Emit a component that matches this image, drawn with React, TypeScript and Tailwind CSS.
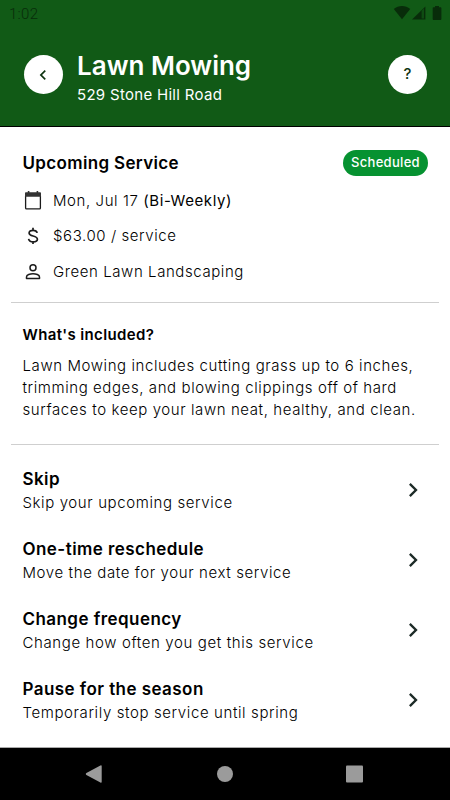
import type { ReactNode } from "react";
import { MdChevronLeft, MdChevronRight } from "react-icons/md";

function StatusBar() {
  return (
    <div className="flex h-[28px] items-center justify-between pl-[9px] pr-[8px] text-[#082c0a]">
      <span className="font-[Roboto,sans-serif] text-[15px] leading-[28px] font-light tracking-[0.3px]">1:02</span>
      <svg width="49" height="16" viewBox="0 0 49 16" fill="currentColor" aria-hidden="true">
        <path d="M0.8 3.1C5.4-0.9 12.6-0.9 17.2 3.1L9 13.2Z" />
        <path d="M19 13.5L32.4 0.4V13.5Z" />
        <path d="M28.6 4.8l2.4-2.3v9.9h-2.4z" fill="#115a16" fillOpacity=".7" />
        <path d="M42 0h4v1.3h1.6c.4 0 .8.4.8.8v11c0 .5-.4.9-.8.9h-7.1a.9.9 0 0 1-.8-.9v-11c0-.4.4-.8.8-.8H42z" />
      </svg>
    </div>
  );
}

function CalendarIcon() {
  return (
    <svg width="22" height="22" viewBox="0 0 22 22" fill="none" stroke="currentColor" aria-hidden="true">
      <path d="M3.6 6V17.9q0 .9.9.9h13q.9 0 .9-.9V6" strokeWidth="1.3" />
      <path d="M3 3.1q0-.9.9-.9H5.8V1h1.6v1.2h7.2V1h1.6v1.2h1.9q.9 0 .9.9v3.6H3z" fill="#333" stroke="none" />
    </svg>
  );
}

function DollarIcon() {
  return (
    <svg width="22" height="22" viewBox="0 0 22 22" fill="none" stroke="currentColor" strokeWidth="1.7" aria-hidden="true">
      <path d="M11 2.8v3M11 16v3M15.2 7.9C14.8 6.4 13.3 5.3 11.1 5.3 8.6 5.3 7.1 6.4 7.1 8c0 1.8 1.6 2.4 4 3 2.7.7 4.3 1.5 4.3 3.3 0 1.7-1.7 2.6-4.2 2.6-2.6 0-4.3-1.2-4.6-3" />
    </svg>
  );
}

function PersonIcon() {
  return (
    <svg width="22" height="22" viewBox="0 0 22 22" fill="none" stroke="currentColor" strokeWidth="1.5" aria-hidden="true">
      <circle cx="11" cy="6.7" r="3" />
      <path d="M4.5 17.4v-1.5c0-2 3.7-3.2 6.5-3.2s6.5 1.2 6.5 3.2v1.5z" strokeLinejoin="round" />
    </svg>
  );
}

function DetailRow({ icon, children }: { icon: ReactNode; children: ReactNode }) {
  return (
    <div className="flex h-[35.5px] items-center">
      <div className="flex w-[31px] shrink-0 text-[#1b1b1b]">{icon}</div>
      <div className="text-[15px] font-light tracking-[0.58px]">{children}</div>
    </div>
  );
}

function ActionRow({ title, text }: { title: string; text: string }) {
  return (
    <button className="flex h-[70.3px] w-full items-center justify-between pl-[22.5px] pr-[23px] text-left">
      <div className="pt-[2px]">
        <div className="text-[17px] leading-[24px] font-semibold tracking-[0.44px]">{title}</div>
        <div className="text-[15px] leading-[24px] font-light tracking-[0.61px]">{text}</div>
      </div>
      <MdChevronRight className="size-[28px] text-[#1d2b27]" />
    </button>
  );
}

export default function App() {
  return (
    <div className="flex h-[800px] w-[450px] flex-col overflow-hidden bg-white font-[Inter,sans-serif] text-black">
      <header className="h-[127px] border-b border-black bg-[#115a16]">
        <StatusBar />
        <div className="flex items-start pl-[24px] pr-[23px] pt-[20px] text-white">
          <button className="mt-[7px] flex size-[39px] items-center justify-center rounded-full bg-white pr-[2px] text-[#0d3310]">
            <MdChevronLeft className="size-[20px]" />
          </button>
          <div className="ml-[14px] flex-1 pt-px">
            <h1 className="text-[26px] leading-[34px] font-semibold tracking-[0px]">Lawn Mowing</h1>
            <p className="text-[15px] leading-[24px] tracking-[0.3px]">529 Stone Hill Road</p>
          </div>
          <button className="mt-[7px] flex size-[39px] items-center justify-center rounded-full bg-white text-[15px] font-medium text-[#0d3310]">?</button>
        </div>
      </header>

      <section className="mx-[11px] h-[176px] border-b border-[#cfcfcf] pl-[11px] pr-[11px] pt-[22px]">
        <div className="flex h-[27px] items-center justify-between">
          <h2 className="pt-[2px] pl-[0.5px] text-[17px] font-semibold tracking-[0.34px]">Upcoming Service</h2>
          <span className="flex h-[26px] w-[85px] items-center justify-center rounded-full bg-[#069231] text-[13px] font-medium tracking-[0.3px] text-white">Scheduled</span>
        </div>
        <div className="pt-[7px]">
          <DetailRow icon={<CalendarIcon />}>Mon, Jul 17 <span className="font-normal">(Bi-Weekly)</span></DetailRow>
          <DetailRow icon={<DollarIcon />}>$63.00 / service</DetailRow>
          <DetailRow icon={<PersonIcon />}>Green Lawn Landscaping</DetailRow>
        </div>
      </section>

      <section className="mx-[11px] h-[142px] border-b border-[#cfcfcf] pl-[11.5px] pt-[20px]">
        <h3 className="text-[15px] leading-[24px] font-semibold tracking-[0.36px]">What's included?</h3>
        <p className="mt-[8px] text-[15px] leading-[22px] font-light tracking-[0.59px]">
          Lawn Mowing includes cutting grass up to 6 inches,<br />
          trimming edges, and blowing clippings off of hard<br />
          surfaces to keep your lawn neat, healthy, and clean.
        </p>
      </section>

      <main className="h-[303px] border-b border-[#aaa] pt-[9.4px]">
        <ActionRow title="Skip" text="Skip your upcoming service" />
        <ActionRow title="One-time reschedule" text="Move the date for your next service" />
        <ActionRow title="Change frequency" text="Change how often you get this service" />
        <ActionRow title="Pause for the season" text="Temporarily stop service until spring" />
      </main>

      <nav className="flex flex-1 items-center justify-center bg-black">
        <svg width="280" height="18" viewBox="0 0 280 18" fill="#9b9b9b" aria-hidden="true">
          <path d="M1.4 8.1L15.4.4q1.3-.6 1.3.8v15.6q0 1.4-1.3.8L1.4 9.9q-1.2-.9 0-1.8z" />
          <circle cx="140" cy="9" r="8" />
          <rect x="261" y="0.5" width="17" height="17" rx="1" />
        </svg>
      </nav>
    </div>
  );
}
